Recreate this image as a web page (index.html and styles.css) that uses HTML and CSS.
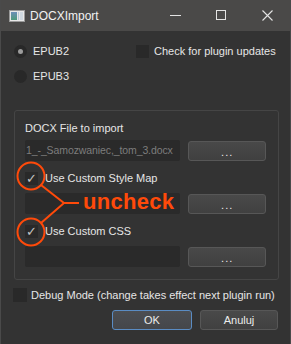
FILE: index.html
```html
<!DOCTYPE html>
<html>
<head>
  <title>DOCXImport</title>
  <link rel="stylesheet" href="styles.css">
</head>
<body>
  <div class="window">
    <div class="titlebar">
      <svg class="app-icon" width="16" height="12" viewBox="0 0 16 12">
        <defs>
          <linearGradient id="pane" x1="0" y1="0" x2="0" y2="1">
            <stop offset="0" stop-color="#6d8fb8"/>
            <stop offset="1" stop-color="#4f9a7a"/>
          </linearGradient>
        </defs>
        <rect x="0.5" y="0.5" width="15" height="11" fill="#e8e8e8" stroke="#9a9a9a"/>
        <rect x="2" y="2" width="6" height="8" fill="url(#pane)"/>
        <rect x="9" y="2" width="1" height="8" fill="#b8c8d8"/>
        <rect x="11" y="2" width="3" height="8" fill="#cfd8e0"/>
      </svg>
      <div class="title">DOCXImport</div>
      <div class="controls">
        <svg class="ctl" width="46" height="31" viewBox="0 0 46 31">
          <line x1="17" y1="15.5" x2="28" y2="15.5" stroke="#e4e4e4" stroke-width="1"/>
        </svg>
        <svg class="ctl" width="46" height="31" viewBox="0 0 46 31">
          <rect x="17.5" y="10.5" width="9" height="9" fill="none" stroke="#e4e4e4" stroke-width="1"/>
        </svg>
        <svg class="ctl" width="46" height="31" viewBox="0 0 46 31">
          <path d="M17.5 10.5 L27.5 20.5 M27.5 10.5 L17.5 20.5" stroke="#e4e4e4" stroke-width="1.1"/>
        </svg>
      </div>
    </div>

    <div class="options">
      <label class="opt"><span class="radio checked"></span>EPUB2</label>
      <label class="opt"><span class="box"></span>Check for plugin updates</label>
      <label class="opt"><span class="radio"></span>EPUB3</label>
    </div>

    <div class="group">
      <div class="group-label">DOCX File to import</div>
      <div class="field-row">
        <div class="field muted">1_-_Samozwaniec,_tom_3.docx</div>
        <div class="btn small">...</div>
      </div>
      <label class="opt check-row"><span class="box ticked">&#10003;</span>Use Custom Style Map</label>
      <div class="field-row">
        <div class="field"></div>
        <div class="btn small">...</div>
      </div>
      <label class="opt check-row"><span class="box ticked">&#10003;</span>Use Custom CSS</label>
      <div class="field-row">
        <div class="field"></div>
        <div class="btn small">...</div>
      </div>
    </div>

    <label class="opt debug"><span class="box"></span>Debug Mode (change takes effect next plugin run)</label>

    <div class="actions">
      <div class="btn focus">OK</div>
      <div class="btn">Anuluj</div>
    </div>

    <!-- annotation drawn over the dialog -->
    <svg class="marks" width="291" height="344" viewBox="0 0 291 344">
      <g fill="none" stroke="#ff4a0a" stroke-width="2">
        <circle cx="30" cy="176" r="13.5"/>
        <circle cx="30" cy="232" r="13.5"/>
        <path d="M40 185 L63 203 L78 203 M63 203 L40 223"/>
      </g>
    </svg>
    <span class="uncheck">uncheck</span>
  </div>
</body>
</html>
```

FILE: styles.css
```css
body {
  margin: 0;
  background-color: #333333;
  font-family: "Liberation Sans", Arial, sans-serif;
  font-size: 11px;
  color: #e6e6e6;
}

.window {
  position: relative;
  width: 291px;
  height: 344px;
  box-sizing: border-box;
  background-color: #333333;
  border-left: 1px solid #4a4a4a;
  border-right: 1px solid #4a4a4a;
  overflow: hidden;
}

.titlebar {
  display: flex;
  align-items: center;
  height: 31px;
  background-color: #4a4948;
  margin: 0 -1px;
}

.app-icon {
  margin-left: 9px;
  margin-top: 1px;
}

.title {
  margin-left: 5px;
  font-size: 12px;
  color: #f2f2f2;
}

.controls {
  display: flex;
  margin-left: auto;
}

.options {
  display: grid;
  grid-template-columns: 122px 1fr;
  align-content: start;
  row-gap: 11px;
  padding: 13px 0 0 13px;
  height: 79px;
  box-sizing: border-box;
}

.opt {
  display: flex;
  align-items: center;
  height: 14px;
}

.radio {
  width: 13px;
  height: 13px;
  border-radius: 50%;
  background-color: #282828;
  margin-right: 6px;
  display: flex;
  align-items: center;
  justify-content: center;
}

.radio.checked::after {
  content: "";
  width: 5px;
  height: 5px;
  border-radius: 50%;
  background-color: #9c9c9c;
}

.box {
  width: 13px;
  height: 13px;
  background-color: #292929;
  margin-right: 5px;
  flex: none;
}

.box.ticked {
  color: #c4c4c4;
  font-size: 13px;
  font-weight: bold;
  line-height: 13px;
  text-align: center;
  font-family: "DejaVu Sans", sans-serif;
  margin-right: 7px;
}

.group {
  margin-left: 13px;
  width: 265px;
  height: 170px;
  box-sizing: border-box;
  border: 1px solid #454545;
  border-radius: 3px;
  padding: 10px 12px 0 10px;
}

.group-label {
  line-height: 14px;
}

.field-row {
  display: flex;
  align-items: center;
  margin-top: 5px;
  height: 21px;
}

.field {
  width: 156px;
  height: 21px;
  box-sizing: border-box;
  background-color: #2a2a2a;
  border-radius: 2px;
  padding: 0 1px;
  line-height: 21px;
  white-space: nowrap;
  overflow: hidden;
}

.field.muted {
  color: #7d7d7d;
  font-size: 10.5px;
  letter-spacing: -0.1px;
}

.check-row {
  margin-top: 10px;
  margin-bottom: -4px;
}

.group .check-row + .field-row {
  margin-top: 12px;
}

.btn {
  display: flex;
  align-items: center;
  justify-content: center;
  width: 79px;
  height: 20px;
  box-sizing: border-box;
  border: 1px solid #575757;
  border-radius: 3px;
  background: linear-gradient(#494949, #404040);
  color: #ececec;
}

.btn.small {
  margin-left: 8px;
  width: 78px;
  padding-top: 3px;
  letter-spacing: 1px;
}

.debug {
  margin: 8px 0 0 12px;
}

.debug .box {
  width: 14px;
  height: 14px;
  margin-right: 4px;
}

.actions {
  display: flex;
  justify-content: flex-end;
  gap: 8px;
  margin: 8px 12px 0 0;
}

.actions .btn {
  width: 78px;
  height: 20px;
}

.btn.focus {
  width: 80px;
  border-color: #5a8cc4;
  background: linear-gradient(#4c4e52, #45474b);
}

.marks {
  position: absolute;
  left: 0;
  top: 0;
  pointer-events: none;
}

.uncheck {
  position: absolute;
  left: 82px;
  top: 189px;
  font-family: "Liberation Sans", Arial, sans-serif;
  font-weight: bold;
  font-size: 22px;
  letter-spacing: 0.3px;
  color: #ff4a0a;
}
```
